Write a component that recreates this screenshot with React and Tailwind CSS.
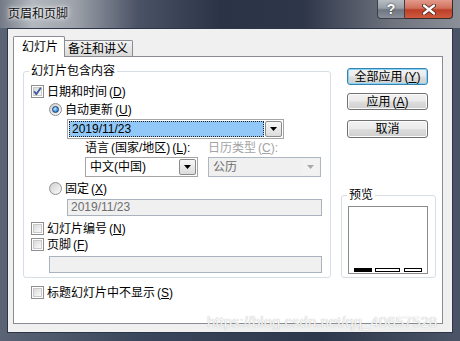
import React from 'react';

const FONT = "font-['Liberation_Sans','Noto_Sans_CJK_SC',sans-serif]";

function Mn({ k }) {
  return (
    <span className="ml-[2px]">
      (<span className="underline">{k}</span>)
    </span>
  );
}

function CheckBox({ checked }) {
  return (
    <span className="relative w-[13px] h-[13px] shrink-0 border border-[#8e8f8f] bg-white p-[1px] flex">
      <span className="flex-1 border border-[#c9c9c9] bg-[linear-gradient(135deg,#d9d9d9,#fafafa)]" />
      {checked && (
        <svg className="absolute inset-0" width="11" height="11" viewBox="0 0 11 11">
          <path d="M2.2 5.2 L4.3 8.2 L8.8 1.8" fill="none" stroke="#3b5aa0" strokeWidth="1.8" strokeLinejoin="round" />
        </svg>
      )}
    </span>
  );
}

function Radio({ checked }) {
  return (
    <span className="w-[13px] h-[13px] shrink-0 rounded-full border border-[#8e8f8f] bg-[linear-gradient(135deg,#cfcfcf,#fbfbfb)] flex items-center justify-center">
      {checked && (
        <span className="w-[7px] h-[7px] rounded-full border border-[#1c3f7a] bg-[radial-gradient(circle_at_40%_35%,#c6ecff,#3c95e0_60%,#1a5fb0)]" />
      )}
    </span>
  );
}

function DropBtn({ disabled }) {
  return (
    <span
      className={`w-[17px] h-full shrink-0 flex items-center justify-center ${
        disabled
          ? 'bg-[#f2f2f2]'
          : 'border border-[#8b8b8b] rounded-[2px] bg-[linear-gradient(#f8f8f8,#dcdcdc)]'
      }`}
    >
      <svg width="7" height="4" viewBox="0 0 7 4">
        <path d="M0 0h7L3.5 4z" fill={disabled ? '#a9a9a9' : '#000'} />
      </svg>
    </span>
  );
}

function Button({ children, primary, className }) {
  return (
    <div
      className={`ml-[6px] w-[81px] rounded-[3px] border flex items-center justify-center leading-[14px] bg-[linear-gradient(#f2f2f2_0%,#ebebeb_48%,#dddddd_52%,#cfcfcf_100%)] ${
        primary ? 'border-[#3c7fb1] [box-shadow:inset_0_0_0_1px_#7fd6f7]' : 'border-[#707070] [box-shadow:inset_0_0_0_1px_#fcfcfc]'
      } ${className}`}
    >
      {children}
    </div>
  );
}

export default function App() {
  return (
    <div className={`w-[460px] h-[341px] flex flex-col bg-[linear-gradient(90deg,#5a6475,#3a465b_30%,#2d384c_70%,#4b5567)] text-[12px] text-black ${FONT}`}>
      {/* title bar */}
      <div className="h-[28px] flex items-start justify-between bg-[linear-gradient(90deg,#737985_0%,#b3b8bf_7%,#9ea3ab_16%,#4a5265_30%,#2b3347_48%,#2e3649_66%,#6d727d_85%,#8b8f97_100%)]">
        <span className="pl-[8px] pt-[7px] leading-[14px] text-[#111] [text-shadow:0_0_6px_#fff,0_0_3px_#fff]">页眉和页脚</span>
        <div className="flex mr-[7px]">
          <div className="w-[28px] h-[19px] rounded-bl-[4px] border border-t-0 border-[#3a3f4a] bg-[linear-gradient(#b9bdc4,#9aa0a8_45%,#6f7681_55%,#8a909a)] flex items-center justify-center text-white font-bold text-[14px] leading-none [text-shadow:0_0_2px_#222]">
            ?
          </div>
          <div className="w-[48px] h-[19px] rounded-br-[4px] border border-t-0 border-l-0 border-[#3a2a2a] bg-[linear-gradient(#e39a8a,#d1705d_45%,#bd3f28_55%,#cf5a3e)] flex items-center justify-center">
            <svg width="14" height="11" viewBox="0 0 14 11">
              <path d="M2 1.5 L12 9.5 M12 1.5 L2 9.5" stroke="#4a2018" strokeWidth="4" strokeLinecap="round" />
              <path d="M2 1.5 L12 9.5 M12 1.5 L2 9.5" stroke="#fff" strokeWidth="2.4" strokeLinecap="round" />
            </svg>
          </div>
        </div>
      </div>

      {/* client area */}
      <div className="relative mx-[7px] h-[305px] bg-[#f0f0f0] border border-[#2c3648] pl-[5px] pt-[7px]">
        {/* tabs */}
        <div className="flex items-end h-[20px]">
          <div className="relative z-10 -mb-px w-[52px] h-[21px] bg-white border border-b-0 border-[#898c95] rounded-t-[2px] pl-[8px] pt-[3px] leading-[14px]">
            幻灯片
          </div>
          <div className="w-[68px] h-[16px] border border-b-0 border-l-0 border-[#898c95] rounded-tr-[2px] bg-[linear-gradient(#f4f4f4,#d9d9d9)] pl-[3px] pt-[1px] leading-[14px]">
            备注和讲义
          </div>
        </div>

        {/* panel */}
        <div className="w-[430px] h-[268px] border border-[#898c95] bg-white flex">
          {/* left column */}
          <div className="pl-[9px] flex flex-col">
            <fieldset className="mt-[7px] w-[308px] h-[214px] border border-[#d5dfe5] rounded-[3px] pl-[7px] flex flex-col">
              <legend className="ml-[-2px] px-[2px] leading-[14px]">幻灯片包含内容</legend>

              <div className="mt-[7px] h-[13px] flex items-center">
                <CheckBox checked />
                <span className="ml-[3px] leading-[14px]">日期和时间<Mn k="D" /></span>
              </div>

              <div className="mt-[5px] ml-[18px] h-[13px] flex items-center">
                <Radio checked />
                <span className="ml-[3px] leading-[14px]">自动更新<Mn k="U" /></span>
              </div>

              <div className="mt-[3px] ml-[36px] w-[217px] h-[20px] border border-[#a5a5a5] bg-white p-[1px] flex">
                <span className="flex-1 mr-[1px] bg-[#91c8f8] border border-dotted border-[#222] pl-[2px] leading-[15px]">2019/11/23</span>
                <DropBtn />
              </div>

              <div className="mt-[2px] ml-[54px] h-[14px] flex leading-[14px]">
                <span className="w-[123px]">语言<span className="ml-[2px]">(国家/地区)</span><Mn k="L" />:</span>
                <span className="text-[#a3a3a3]">日历类型<Mn k="C" />:</span>
              </div>

              <div className="mt-[2px] ml-[54px] flex gap-[10px]">
                <div className="w-[113px] h-[20px] border border-[#a5a5a5] bg-white p-[1px] flex">
                  <span className="flex-1 pl-[3px] leading-[16px]">中文(中国)</span>
                  <DropBtn />
                </div>
                <div className="w-[113px] h-[20px] border border-[#adb7c2] bg-[#f0f0f0] p-[1px] flex">
                  <span className="flex-1 pl-[3px] leading-[16px] text-[#6d6d6d]">公历</span>
                  <DropBtn disabled />
                </div>
              </div>

              <div className="mt-[5px] ml-[18px] h-[13px] flex items-center">
                <Radio />
                <span className="ml-[3px] leading-[14px]">固定<Mn k="X" /></span>
              </div>

              <div className="mt-[4px] ml-[36px] w-[255px] h-[17px] border border-[#aab3bd] bg-[#f0f0f0] pl-[3px] leading-[15px] text-[#6d6d6d]">
                2019/11/23
              </div>

              <div className="mt-[6px] h-[13px] flex items-center">
                <CheckBox />
                <span className="ml-[3px] leading-[14px]">幻灯片编号<Mn k="N" /></span>
              </div>

              <div className="mt-[3px] h-[13px] flex items-center">
                <CheckBox />
                <span className="ml-[3px] leading-[14px]">页脚<Mn k="F" /></span>
              </div>

              <div className="mt-[5px] ml-[18px] w-[273px] h-[17px] border border-[#aab3bd] bg-[#f0f0f0]" />
            </fieldset>

            <div className="mt-[8px] ml-[8px] h-[13px] flex items-center">
              <CheckBox />
              <span className="ml-[3px] leading-[14px]">标题幻灯片中不显示<Mn k="S" /></span>
            </div>
          </div>

          {/* right column */}
          <div className="ml-[10px] w-[95px] flex flex-col">
            <Button primary className="mt-[11px] h-[17px]">全部应用<Mn k="Y" /></Button>
            <Button className="mt-[8px] h-[17px]">应用<Mn k="A" /></Button>
            <Button className="mt-[10px] h-[18px]">取消</Button>

            <fieldset className="mt-[50px] w-[95px] h-[90px] border border-[#d5dfe5] rounded-[3px] pl-[6px]">
              <legend className="ml-[-1px] px-[2px] leading-[14px]">预览</legend>
              <div className="mt-[4px] w-[80px] h-[68px] border border-[#8c8c8c] bg-white flex items-end pl-[5px] pb-[1px]">
                <span className="w-[18px] h-[4px] bg-black" />
                <span className="ml-[3px] w-[25px] h-[4px] border border-black bg-white" />
                <span className="ml-[4px] w-[18px] h-[4px] border border-black bg-white" />
              </div>
            </fieldset>
          </div>
        </div>

        <span className="absolute left-[199px] top-[284px] text-[15px] leading-[18px] whitespace-nowrap text-white/90 [text-shadow:0_0_1px_#9a9a9a]">
          https://blog.csdn.net/qq_40657528
        </span>
      </div>
    </div>
  );
}
